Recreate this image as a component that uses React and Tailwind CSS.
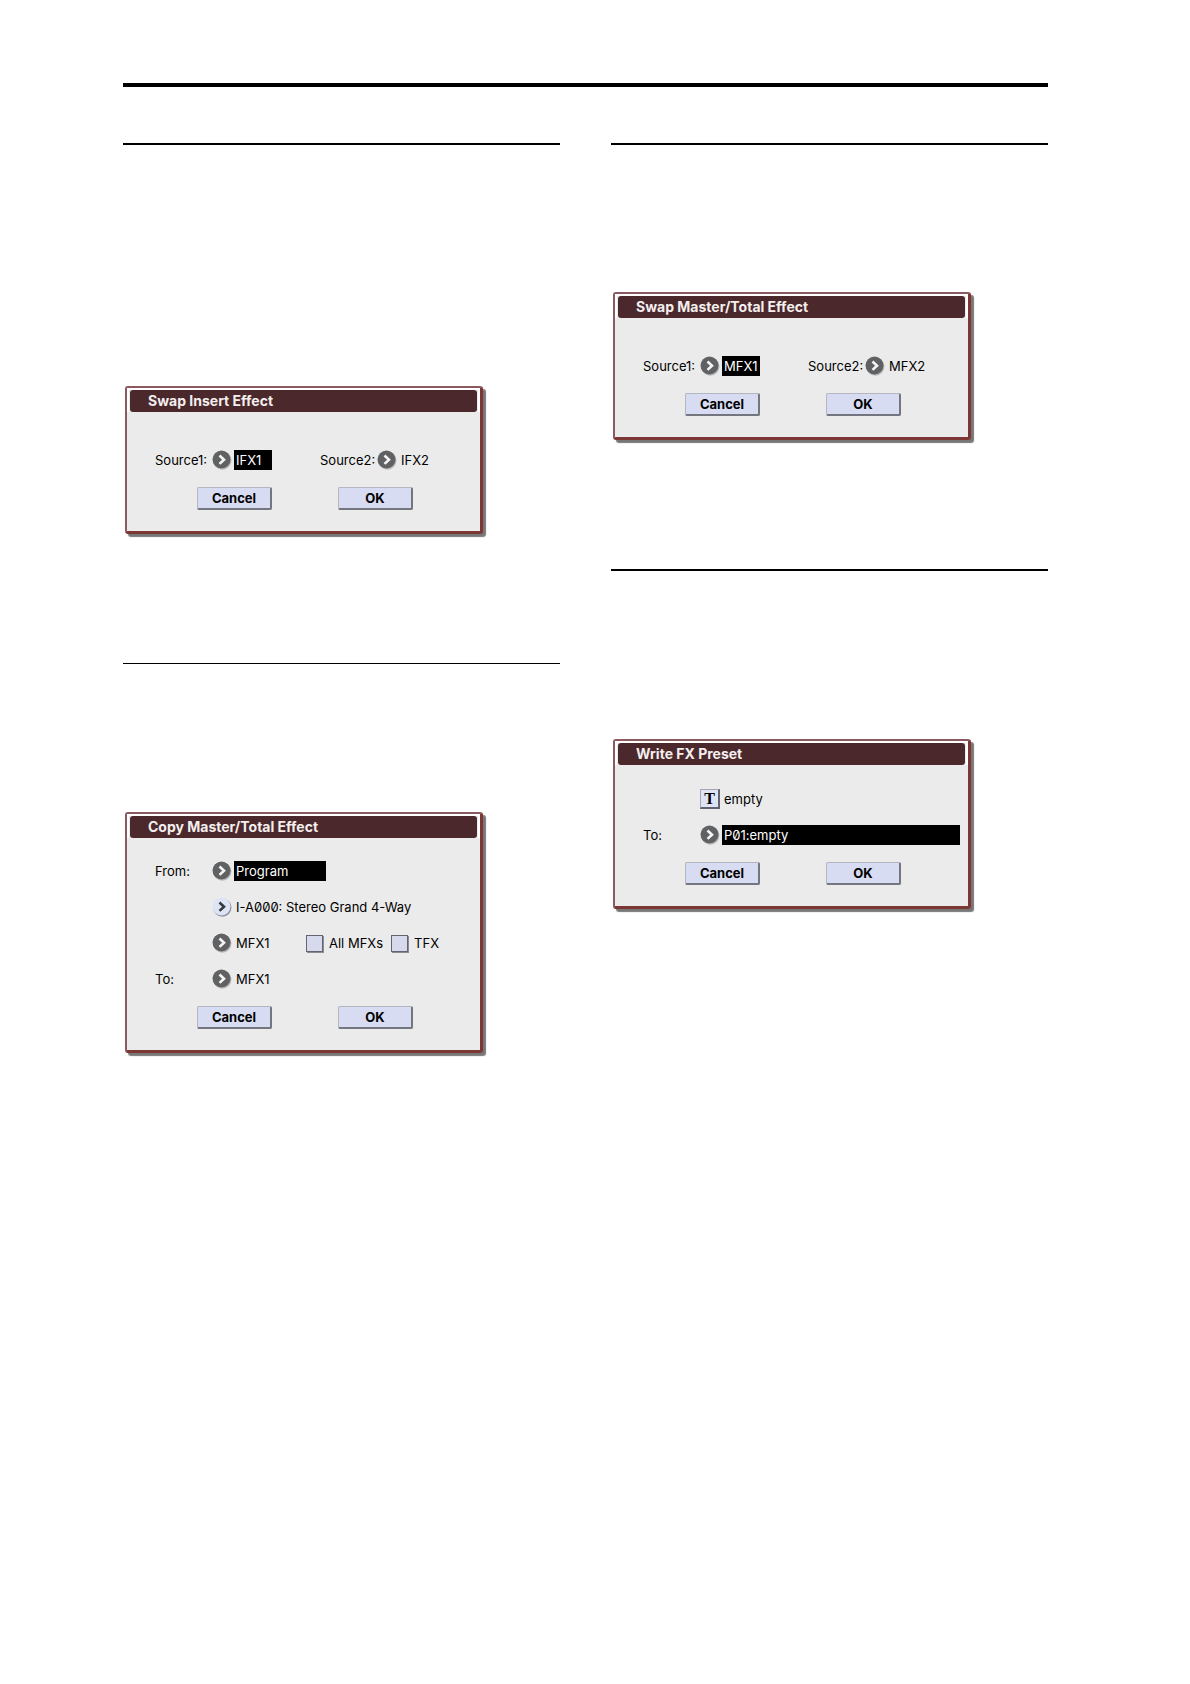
import { useId } from 'react';
import clsx from 'clsx';

const PopupButton = ({ id, light }) => (
  <button id={id} type="button" className="size-5 shrink-0">
    <svg viewBox="0 0 20 20" className="size-full">
      <circle cx="10.3" cy="10.6" r="9.2" fill={light ? '#8c8fa0' : '#b8b8b8'} />
      <circle cx="9.5" cy="9.5" r="9" fill={light ? '#dfe3f6' : '#5f6163'} />
      <path
        d="M7.5 5.5l4.5 4.2-4.5 4.2"
        fill="none"
        stroke={light ? '#333a3c' : '#f4f4f4'}
        strokeWidth="2.6"
      />
    </svg>
  </button>
);

const Field = ({ label, value, selected, light, width }) => {
  const id = useId();
  return (
    <div className="flex h-5 items-center">
      <label htmlFor={id} className="w-[57px] shrink-0">{label}</label>
      <PopupButton id={id} light={light} />
      <span
        className={clsx(
          'ml-0.5 h-5 px-0.5 leading-5 whitespace-nowrap',
          selected && 'bg-black text-white',
          width
        )}
      >
        {value}
      </span>
    </div>
  );
};

const CheckBox = ({ label }) => (
  <label className="flex items-center gap-1.5">
    <input
      type="checkbox"
      className="size-[17px] appearance-none border border-[#62656f] bg-[#d6daec] shadow-[1px_1px_0_#8a8c94]"
    />
    {label}
  </label>
);

const PushButton = ({ children }) => (
  <button
    type="button"
    className="h-[23px] w-[75px] rounded-[2px] border-t border-r-2 border-b-2 border-l border-t-[#b4b6c0] border-r-[#74767f] border-b-[#74767f] border-l-[#b4b6c0] bg-[#d8dcf2] font-bold"
  >
    {children}
  </button>
);

const Dialog = ({ title, className, children }) => (
  <section
    className={clsx(
      'ml-0.5 max-w-[358px] rounded-[3px] border-t-2 border-r-3 border-b-3 border-l-2 border-t-[#8a5a60] border-r-[#7c3634] border-b-[#7c3634] border-l-[#8a5a60] bg-[#ebebeb] pb-[21px] text-[13px] leading-5 text-black slashed-zero shadow-[3px_3px_1px_#777]',
      className
    )}
  >
    <div className="border-t-2 border-r-2 border-l-2 border-white px-px">
      <h2 className="h-[22px] rounded-[3px] bg-[#4a282b] px-[18px] text-[14px] leading-[22px] font-bold text-[#f4eeee]">
        {title}
      </h2>
    </div>
    {children}
    <div className="mt-[17px] flex gap-[66px] pl-[70px]">
      <PushButton>Cancel</PushButton>
      <PushButton>OK</PushButton>
    </div>
  </section>
);

const SwapDialog = ({ title, source1, source2, className }) => (
  <Dialog title={title} className={className}>
    <div className="grid grid-cols-[165px_1fr] pt-[38px] pl-7">
      <Field label="Source1:" value={source1} selected width="w-[38px]" />
      <Field label="Source2:" value={source2} />
    </div>
  </Dialog>
);

const App = () => (
  <main className="bg-white pt-[83px] pr-[142px] pb-[100px] pl-[123px] font-['Inter','Liberation_Sans',sans-serif]">
    <hr className="border-t-4 border-black" />
    <div className="grid grid-cols-2 gap-[51px] pt-14">
      {/* Left column */}
      <div>
        <hr className="border-t-2 border-black" />
        <SwapDialog title="Swap Insert Effect" source1="IFX1" source2="IFX2" className="mt-[241px]" />

        <hr className="mt-[129px] border-t border-black" />
        <Dialog title="Copy Master/Total Effect" className="mt-[148px]">
          <div className="flex flex-col gap-4 pt-[23px] pl-7">
            <Field label="From:" value="Program" selected width="w-[92px]" />
            <Field value="I-A000: Stereo Grand 4-Way" light />
            <div className="flex">
              <Field value="MFX1" width="w-[72px]" />
              <div className="flex gap-2">
                <CheckBox label="All MFXs" />
                <CheckBox label="TFX" />
              </div>
            </div>
            <Field label="To:" value="MFX1" />
          </div>
        </Dialog>
      </div>

      {/* Right column */}
      <div>
        <hr className="border-t-2 border-black" />
        <SwapDialog title="Swap Master/Total Effect" source1="MFX1" source2="MFX2" className="mt-[147px]" />

        <hr className="mt-[129px] border-t-2 border-black" />
        <Dialog title="Write FX Preset" className="mt-[168px]">
          <div className="flex flex-col gap-4 pt-6 pl-7">
            <div className="flex h-5 items-center pl-[57px]">
              <button
                type="button"
                aria-label="Edit name"
                className="size-5 border-t border-r-2 border-b-2 border-l border-t-[#a4a6b0] border-r-[#62656f] border-b-[#62656f] border-l-[#a4a6b0] bg-[#dfe3f6] font-['Liberation_Serif',serif] text-[16px] leading-4 font-bold"
              >
                T
              </button>
              <input type="text" aria-label="Preset name" defaultValue="empty" className="ml-0.5 w-40 px-0.5" />
            </div>
            <Field label="To:" value="P01:empty" selected width="w-[238px]" />
          </div>
        </Dialog>
      </div>
    </div>
  </main>
);

export default App;
